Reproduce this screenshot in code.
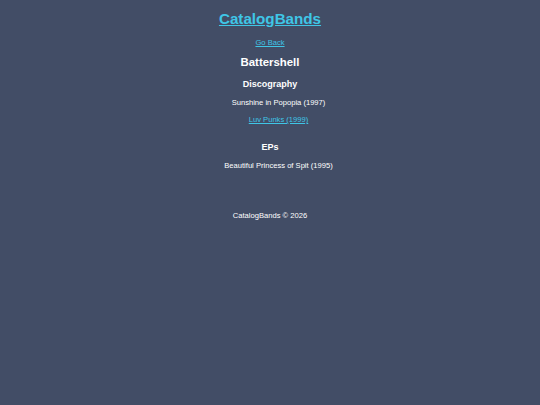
import React from "react";

export default function App() {
  return (
    <div className="min-h-[405px] bg-[#424d66] text-white text-center font-['Liberation_Sans',Arial,sans-serif]">
      <header className="pt-[9px]">
        <h1 className="text-[15.2px] font-bold leading-[19px]">
          <a href="#" className="text-[#3fc6e6] underline">CatalogBands</a>
        </h1>
      </header>
      <main>
        <p className="mt-[10px] text-[7.6px] leading-[10px]">
          <a href="#" className="text-[#3fc6e6] underline">Go Back</a>
        </p>
        <h2 className="mt-[7px] text-[11.4px] font-bold leading-[14px]">Battershell</h2>
        <h3 className="mt-[9px] text-[9px] font-bold leading-[12px]">Discography</h3>
        <ul className="pl-[17px] text-[7.6px] leading-[10px]">
          <li className="mt-[8px]">Sunshine in Popopia (1997)</li>
          <li className="mt-[7px]">
            <a href="#" className="text-[#3fc6e6] underline">Luv Punks (1999)</a>
          </li>
        </ul>
        <h3 className="mt-[16px] text-[9px] font-bold leading-[12px]">EPs</h3>
        <ul className="pl-[17px] text-[7.6px] leading-[10px]">
          <li className="mt-[8px]">Beautiful Princess of Spit (1995)</li>
        </ul>
      </main>
      <footer className="mt-[40px] text-[7.6px] leading-[10px]">CatalogBands © 2026</footer>
    </div>
  );
}
